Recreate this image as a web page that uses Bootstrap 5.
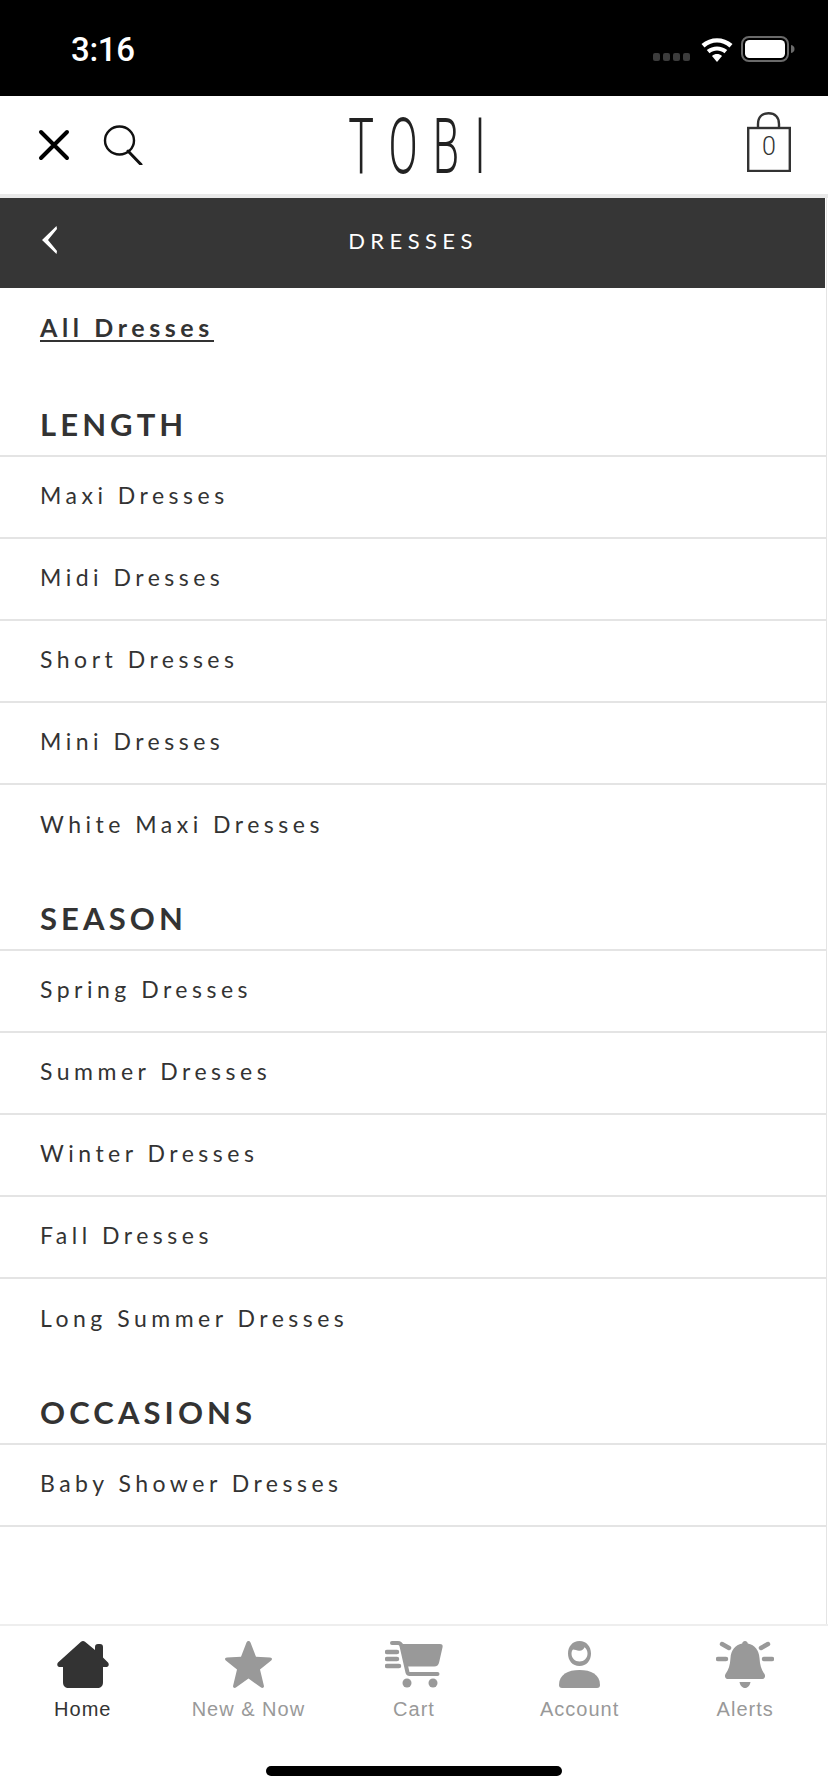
<!DOCTYPE html>
<html lang="en">
<head>
  <meta charset="UTF-8">
  <meta name="viewport" content="width=device-width, initial-scale=1.0">
  <title>TOBI - Dresses</title>
  <link href="https://cdn.jsdelivr.net/npm/bootstrap@5.3.0/dist/css/bootstrap.min.css" rel="stylesheet">
  <style>
    body {
      background: #fff;
      color: #333;
      font-family: "Lato", "Liberation Sans", sans-serif;
    }
    .app-shell { height: 1792px; width: 828px; overflow: hidden; }
    .status-bar { height: 96px; background: #000; color: #fff; padding: 2px 33px 0 71px; }
    .status-time { font-family: "Roboto", sans-serif; font-weight: 500; font-size: 33px; line-height: 1; letter-spacing: -.3px; margin-top: 1px; }
    .signal-dots { margin-right: 10px; margin-left: 2px; margin-top: 16px; }
    .top-head { height: 102px; border-bottom: 4px solid #e9e9e9; display: grid; grid-template-columns: 1fr auto 1fr; align-items: center; padding: 0 37px 0 38px; }
    .search-icon { margin-left: 33px; }
    .logo-text { font-family: "Roboto", sans-serif; font-weight: 300; font-size: 77px; line-height: 1; color: #222; letter-spacing: 27px; padding: 4px 0 0 36px; transform: scaleX(.56); width: 135px; display: flex; justify-content: center; white-space: nowrap; }
    .bag-box { width: 44px; height: 60px; position: relative; margin-bottom: 6px; }
    .bag-count { position: absolute; left: 0; right: 0; top: 22px; text-align: center; font-family: "Roboto", sans-serif; font-weight: 300; font-size: 25px; line-height: 1; color: #333; }
    .menu-wrap { width: 827px; border-right: 1px solid #e4e4e4; }
    .menu-bar { height: 90px; background: #363636; color: #fff; margin-right: 1px; padding-left: 42px; }
    .menu-chevron { margin-top: -6px; }
    .menu-bar-title { font-size: 22px; letter-spacing: 5.4px; line-height: 1; font-weight: 400; margin-bottom: 4px; padding-right: 41px; }
    .all-link { display: block; padding: 26px 0 0 40px; height: 85px; text-decoration: none; }
    .all-link span { display: inline-block; font-size: 25px; font-weight: 700; letter-spacing: 4.6px; color: #333; line-height: 26px; border-bottom: 2px solid #333; }
    .group-title { height: 84px; margin: 0; padding: 0 0 13px 40px; display: flex; align-items: flex-end; font-family: "Lato", sans-serif; font-size: 31px; line-height: 36px; font-weight: 700; letter-spacing: 4.1px; color: #333; border-bottom: 2px solid #e4e4e4; }
    .menu-list.list-group-flush .list-group-item { height: 82px; border-color: #e4e4e4; border-width: 0 0 2px; padding: 0 0 4px 40px; display: flex; align-items: center; font-size: 23px; letter-spacing: 4.5px; color: #333; background: transparent; }
    .menu-list.no-end .list-group-item:last-child { border-bottom-width: 0; }
    .tab-bar { height: 168px; border-top: 2px solid #eee; padding-top: 15px; position: relative; }
    .tab-item { color: #999; text-decoration: none; font-family: "Liberation Sans", sans-serif; font-size: 20px; letter-spacing: 1px; line-height: 24px; }
    .tab-item.is-on { color: #333; }
    .tab-icon { height: 47px; margin-bottom: 9px; display: block; }
    .home-pill { position: absolute; left: 266px; bottom: 16px; width: 296px; height: 10px; border-radius: 5px; background: #000; }
  </style>
</head>
<body>
<div class="app-shell d-flex flex-column">

  <div class="status-bar d-flex align-items-center justify-content-between">
    <div class="status-time">3:16</div>
    <div class="d-flex align-items-center">
      <svg width="38" height="8" viewBox="0 0 38 8" fill="#3c3c3c" class="signal-dots"><rect x="0" y="0" width="7" height="8" rx="2"/><rect x="10" y="0" width="7" height="8" rx="2"/><rect x="20" y="0" width="7" height="8" rx="2"/><rect x="30" y="0" width="7" height="8" rx="2"/></svg>
      <svg width="32" height="25" viewBox="0 0 32 25" fill="#fff"><path d="M16 25 11 19c3-2.600 7-2.600 10 0z"/><path d="M8.500 16.200 5.800 13c6-4.800 14.400-4.800 20.400 0l-2.700 3.200c-4.500-3.500-10.500-3.500-15 0z"/><path d="M3.500 10.400 .5 7c9-7.600 22-7.600 31 0l-3 3.400C20.800 4 11.200 4 3.500 10.400z"/></svg>
      <svg width="54" height="26" viewBox="0 0 54 26" class="ms-2"><rect x="1" y="1" width="46" height="24" rx="7" fill="none" stroke="#6a6a6a" stroke-width="2"/><rect x="4" y="4" width="40" height="18" rx="4.500" fill="#fff"/><path d="M50 9c2.500.5 3.500 2 3.500 4s-1 3.500-3.500 4z" fill="#6a6a6a"/></svg>
    </div>
  </div>

  <div class="top-head">
    <div class="d-flex align-items-center">
      <svg width="32" height="32" viewBox="0 0 32 32" fill="none" stroke="#000" stroke-width="4" stroke-linecap="round"><path d="M3 3 29 29M29 3 3 29"/></svg>
      <svg width="40" height="40" viewBox="0 0 40 40" fill="none" stroke="#111" stroke-width="2.400" stroke-linecap="round" class="search-icon"><ellipse cx="16.500" cy="15.500" rx="14.500" ry="14"/><path d="M25 26 38 39.500" stroke-width="3"/></svg>
    </div>
    <div class="logo-text">TOBI</div>
    <div class="d-flex justify-content-end">
      <div class="bag-box">
        <svg width="44" height="60" viewBox="0 0 44 60" fill="none" stroke="#333" stroke-width="2.400"><rect x="1.200" y="16" width="41.600" height="43"/><path d="M11 16V12C11 5 15 1.200 21.500 1.200S32 5 32 12V16"/></svg>
        <div class="bag-count">0</div>
      </div>
    </div>
  </div>

  <div class="menu-wrap flex-grow-1">
    <div class="menu-bar d-flex align-items-center position-relative">
      <svg width="16" height="28" viewBox="0 0 16 28" fill="#fff" class="position-absolute menu-chevron"><path d="M14.500 0 15 3 6 14l9 11-.5 3L0 14z"/></svg>
      <div class="menu-bar-title w-100 text-center">DRESSES</div>
    </div>

    <a href="#" class="all-link"><span>All Dresses</span></a>

    <h2 class="group-title">LENGTH</h2>
    <div class="list-group list-group-flush menu-list no-end">
      <a href="#" class="list-group-item">Maxi Dresses</a>
      <a href="#" class="list-group-item">Midi Dresses</a>
      <a href="#" class="list-group-item">Short Dresses</a>
      <a href="#" class="list-group-item">Mini Dresses</a>
      <a href="#" class="list-group-item">White Maxi Dresses</a>
    </div>

    <h2 class="group-title">SEASON</h2>
    <div class="list-group list-group-flush menu-list no-end">
      <a href="#" class="list-group-item">Spring Dresses</a>
      <a href="#" class="list-group-item">Summer Dresses</a>
      <a href="#" class="list-group-item">Winter Dresses</a>
      <a href="#" class="list-group-item">Fall Dresses</a>
      <a href="#" class="list-group-item">Long Summer Dresses</a>
    </div>

    <h2 class="group-title">OCCASIONS</h2>
    <div class="list-group list-group-flush menu-list">
      <a href="#" class="list-group-item">Baby Shower Dresses</a>
    </div>
  </div>

  <div class="tab-bar d-flex align-items-start">
    <a href="#" class="tab-item is-on d-flex flex-column align-items-center w-100">
      <svg class="tab-icon" width="52" height="47" viewBox="0 0 52 47" fill="#333"><path d="M24 .8c1.200-1 2.800-1 4 0L38 9V6c0-2 1-3 3-3h2c2 0 3 1 3 3v10.500l5 5.100c1.500 1.700.6 4.400-1.500 4.400H46v15c0 4-2 6-6 6H12c-4 0-6-2-6-6V26H2.500C.4 26-.5 23.300 1 21.600z"/></svg>
      Home
    </a>
    <a href="#" class="tab-item d-flex flex-column align-items-center w-100">
      <svg class="tab-icon" width="47" height="47" viewBox="0 0 47 47" fill="#999"><path d="M23.500 0c1 0 1.600.6 2 1.600l5.500 14.200 14 .6c2.200.1 2.500 2 1.200 3l-11.200 9 3.900 16.400c.4 1.800-1.400 2.800-2.800 1.800L23.500 37.500l-12.600 9.100c-1.400 1-3.200 0-2.800-1.800L12 28.400 .8 19.400c-1.300-1-1-2.900 1.200-3l14-.6 5.500-14.200c.4-1 1-1.600 2-1.600z"/></svg>
      New &amp; Now
    </a>
    <a href="#" class="tab-item d-flex flex-column align-items-center w-100">
      <svg class="tab-icon" width="58" height="47" viewBox="0 0 58 47" fill="#999"><path d="M16 3h39c2 0 3 1 2.600 3l-3.400 15c-.6 3-2.200 4.500-5 4.500H21.500z"/><path d="M7 2h6c2 0 3 1 3.500 3l6 26.500c.3 1 1 1.500 2 1.500h28" fill="none" stroke="#999" stroke-width="4" stroke-linecap="round"/><path d="M2 11h10M2 18h10M2 25h12" fill="none" stroke="#999" stroke-width="4.500" stroke-linecap="round"/><circle cx="22" cy="42" r="4.500"/><circle cx="48" cy="42" r="4.500"/></svg>
      Cart
    </a>
    <a href="#" class="tab-item d-flex flex-column align-items-center w-100">
      <svg class="tab-icon" width="41" height="47" viewBox="0 0 41 47" fill="#999"><path fill-rule="evenodd" d="M20.500 0C27.500 0 32 5.500 32 12.500S27.500 25 20.500 25 9 19.500 9 12.500 13.500 0 20.500 0zM14 8.500c-1 1-1.500 2.500-1.500 4 0 4.500 3.400 8 8 8s8-3.500 8-8c0-2.500-1-4.700-3-6.200-1 2.500-3 3.700-5.500 3.400-2.200-.3-4-1-6-1.200z"/><path d="M0 44C0 33.500 9 29 20.500 29S41 33.500 41 44c0 2-1 3-3 3H3c-2 0-3-1-3-3z"/></svg>
      Account
    </a>
    <a href="#" class="tab-item d-flex flex-column align-items-center w-100">
      <svg class="tab-icon" width="58" height="47" viewBox="0 0 58 47" fill="#999"><path d="M29 0c1.500 0 2.600 1 2.800 2.600C39 4 43 9.500 43.500 17c.4 7 2 12 5 16 1.200 2 .4 5-2 5h-35c-2.400 0-3.200-3-2-5 3-4 4.600-9 5-16C15 9.500 19 4 26.200 2.600 26.400 1 27.500 0 29 0z"/><path d="M23.500 41h11c-.6 3.600-2.800 6-5.500 6s-4.900-2.400-5.500-6z"/><path d="M2 18h8M48 18h8M6 3l7 4M52 3l-7 4" fill="none" stroke="#999" stroke-width="4.500" stroke-linecap="round"/></svg>
      Alerts
    </a>
    <div class="home-pill"></div>
  </div>
</div>
<script src="https://cdn.jsdelivr.net/npm/bootstrap@5.3.0/dist/js/bootstrap.bundle.min.js"></script>
</body>
</html>
